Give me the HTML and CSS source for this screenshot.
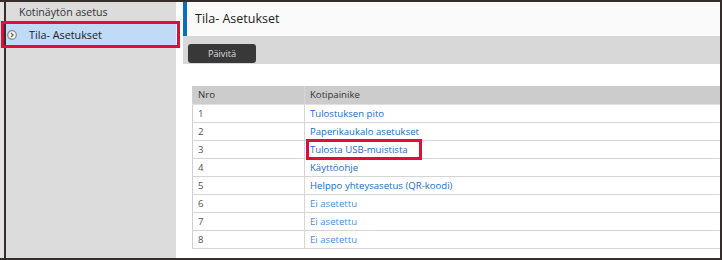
FILE: index.html
```html
<!DOCTYPE html>
<html lang="fi">
<head>
<meta charset="utf-8">
<link rel="stylesheet" href="styles.css">
</head>
<body>
<div class="outer">
  <div class="frame">
    <aside class="sidebar">
      <div class="side-head">Kotinäytön asetus</div>
      <div class="side-item">
        <svg class="side-icon" width="10" height="10" viewBox="0 0 10 10">
          <circle cx="5" cy="5" r="4.3" fill="#f4f4f4" stroke="#8a8a8a" stroke-width="1.2"/>
          <path d="M4.1 3 L6 5 L4.1 7" fill="none" stroke="#6a6a6a" stroke-width="1.3"/>
        </svg>
        <span>Tila- Asetukset</span>
        <div class="mark mark-side"></div>
      </div>
    </aside>
    <main class="content">
      <div class="title">Tila- Asetukset</div>
      <div class="toolbar"><button class="btn">Päivitä</button></div>
      <table class="grid">
        <thead>
          <tr><th class="c-no">Nro</th><th>Kotipainike</th></tr>
        </thead>
        <tbody>
          <tr><td class="c-no">1</td><td><span class="link">Tulostuksen pito</span></td></tr>
          <tr><td class="c-no">2</td><td><span class="link">Paperikaukalo asetukset</span></td></tr>
          <tr><td class="c-no">3</td><td class="rel"><span class="link">Tulosta USB-muistista</span><div class="mark mark-row"></div></td></tr>
          <tr><td class="c-no">4</td><td><span class="link">Käyttöohje</span></td></tr>
          <tr><td class="c-no">5</td><td><span class="link">Helppo yhteysasetus (QR-koodi)</span></td></tr>
          <tr><td class="c-no">6</td><td><span class="link unset">Ei asetettu</span></td></tr>
          <tr><td class="c-no">7</td><td><span class="link unset">Ei asetettu</span></td></tr>
          <tr><td class="c-no">8</td><td><span class="link unset">Ei asetettu</span></td></tr>
        </tbody>
      </table>
    </main>
  </div>
</div>
</body>
</html>
```
FILE: styles.css
```css
* { box-sizing: border-box; }
html, body { margin: 0; padding: 0; }
body {
  width: 722px;
  height: 260px;
  overflow: hidden;
  background: #ffffff;
  font-family: "Open Sans", "Noto Sans", sans-serif;
  color: #333;
}
.outer {
  width: 722px;
  height: 260px;
  border-top: 2px solid #352c2c;
  border-bottom: 2px solid #352c2c;
  border-right: 2px solid #352c2c;
  padding-left: 4px;
  background: #e4e4e4;
}
.frame {
  display: flex;
  height: 256px;
  border-left: 2px solid #352c2c;
  background: #fff;
}
.sidebar {
  width: 170px;
  flex: none;
  background: #dcdcdc;
}
.side-head {
  height: 21px;
  padding-left: 13px;
  font-size: 10.6px;
  line-height: 21px;
  color: #333;
}
.side-item {
  position: relative;
  height: 23px;
  display: flex;
  align-items: center;
  background: #c0dbf6;
  font-size: 10.8px;
  color: #222;
}
.side-icon { margin-left: 1px; margin-right: 12px; }
.mark {
  position: absolute;
  border: 3px solid #dc0f3c;
  pointer-events: none;
}
.mark-side {
  left: -5px;
  top: -2px;
  width: 179px;
  height: 27px;
}
.content {
  flex: 1;
  padding-left: 7px;
  background: #fff;
}
.title {
  height: 34px;
  border-left: 4px solid #0a6ebd;
  background: #fafafa;
  padding-left: 8px;
  font-size: 12.5px;
  line-height: 34px;
  color: #222;
}
.toolbar {
  height: 28px;
  background: #d8d8d8;
  padding: 4px 0 0 5px;
}
.btn {
  width: 68px;
  height: 19px;
  border: none;
  border-radius: 3px;
  background: #383838;
  color: #ddd;
  font-family: "Open Sans", "Noto Sans", sans-serif;
  font-size: 9.2px;
  padding: 0;
}
.grid {
  margin-top: 22px;
  margin-left: 9px;
  width: calc(100% - 9px);
  border-collapse: collapse;
  font-size: 9.6px;
}
.grid th, .grid td {
  height: 18px;
  padding: 0 0 0 5px;
  text-align: left;
  font-weight: normal;
  border-bottom: 1px solid #d4d4d4;
}
.grid th {
  background: #cccccc;
  color: #333;
  border-bottom: 1px solid #e0e0e0;
}
.grid .c-no {
  width: 112px;
  border-left: 1px solid #cfcfcf;
  border-right: 1px solid #d6d6d6;
  color: #5a4d4d;
}
.grid th.c-no { color: #333; }
.rel { position: relative; }
.link { color: #1a6ccc; }
.link.unset { color: #4a8ed9; }
.mark-row {
  left: 1px;
  top: -2px;
  width: 116px;
  height: 21px;
}
```
